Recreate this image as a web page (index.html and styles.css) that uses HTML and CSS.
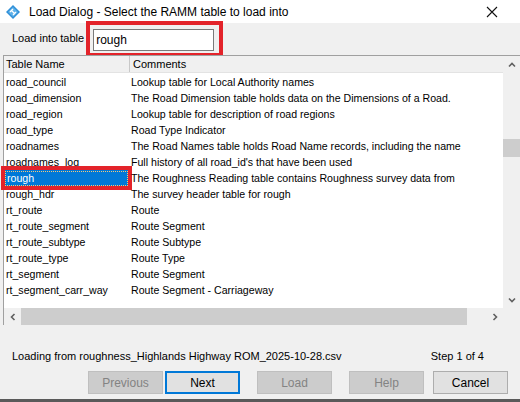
FILE: index.html
```html
<!DOCTYPE html>
<html>
<head>
<meta charset="utf-8">
<link rel="stylesheet" href="styles.css">
</head>
<body>
<div class="window">
  <div class="titlebar">
    <svg class="app-icon" width="16" height="16" viewBox="0 0 16 16">
      <path d="M8 1 L15 8 L8 15 L1 8 Z" fill="#2f8fd8"/>
      <path d="M8 3 L13 8 L8 13 L3 8 Z" fill="#5fb2ea"/>
      <path d="M5 8 L8 5 M8 11 L11 8 M6 6 L10 10" stroke="#ffffff" stroke-width="1.2" fill="none"/>
    </svg>
    <span class="title">Load Dialog - Select the RAMM table to load into</span>
    <svg class="close" width="12" height="12" viewBox="0 0 12 12">
      <path d="M1 1 L11 11 M11 1 L1 11" stroke="#111" stroke-width="1.1"/>
    </svg>
  </div>

  <div class="toprow">
    <span class="label">Load into table</span>
    <div class="highlight input-hl">
      <div class="input">rough</div>
    </div>
  </div>

  <div class="list">
    <div class="list-main">
      <div class="list-body">
        <div class="grid-header">
          <div class="col-name hcell">Table Name</div>
          <div class="col-comment hcell">Comments</div>
        </div>
        <div class="rows">
          <div class="row"><div class="col-name">road_council</div><div class="col-comment">Lookup table for Local Authority names</div></div>
          <div class="row"><div class="col-name">road_dimension</div><div class="col-comment">The Road Dimension table holds data on the Dimensions of a Road.</div></div>
          <div class="row"><div class="col-name">road_region</div><div class="col-comment">Lookup table for description of road regions</div></div>
          <div class="row"><div class="col-name">road_type</div><div class="col-comment">Road Type Indicator</div></div>
          <div class="row"><div class="col-name">roadnames</div><div class="col-comment">The Road Names table holds Road Name records, including the name</div></div>
          <div class="row"><div class="col-name">roadnames_log</div><div class="col-comment">Full history of all road_id's that have been used</div></div>
          <div class="row"><div class="col-name selected"><span class="focus">rough</span></div><div class="col-comment">The Roughness Reading table contains Roughness survey data from</div></div>
          <div class="row"><div class="col-name">rough_hdr</div><div class="col-comment">The survey header table for rough</div></div>
          <div class="row"><div class="col-name">rt_route</div><div class="col-comment">Route</div></div>
          <div class="row"><div class="col-name">rt_route_segment</div><div class="col-comment">Route Segment</div></div>
          <div class="row"><div class="col-name">rt_route_subtype</div><div class="col-comment">Route Subtype</div></div>
          <div class="row"><div class="col-name">rt_route_type</div><div class="col-comment">Route Type</div></div>
          <div class="row"><div class="col-name">rt_segment</div><div class="col-comment">Route Segment</div></div>
          <div class="row"><div class="col-name">rt_segment_carr_way</div><div class="col-comment">Route Segment - Carriageway</div></div>
        </div>
      </div>
      <div class="hscroll">
        <div class="sbtn"><svg width="8" height="8" viewBox="0 0 8 8"><path d="M5.5 1 L2.5 4 L5.5 7" stroke="#606060" stroke-width="1.6" fill="none"/></svg></div>
        <div class="hthumb"></div>
        <div class="htrack"></div>
        <div class="sbtn"><svg width="8" height="8" viewBox="0 0 8 8"><path d="M2.5 1 L5.5 4 L2.5 7" stroke="#606060" stroke-width="1.6" fill="none"/></svg></div>
      </div>
    </div>
    <div class="vscroll">
      <div class="sbtn"><svg width="8" height="8" viewBox="0 0 8 8"><path d="M1 5.5 L4 2.5 L7 5.5" stroke="#606060" stroke-width="1.6" fill="none"/></svg></div>
      <div class="vtrack-top"></div>
      <div class="vthumb"></div>
      <div class="vtrack-bottom"></div>
      <div class="sbtn"><svg width="8" height="8" viewBox="0 0 8 8"><path d="M1 2.5 L4 5.5 L7 2.5" stroke="#606060" stroke-width="1.6" fill="none"/></svg></div>
      <div class="corner"></div>
    </div>
  </div>

  <div class="status">
    <span>Loading from roughness_Highlands Highway ROM_2025-10-28.csv</span>
    <span class="step">Step 1 of 4</span>
  </div>

  <div class="buttons">
    <div class="btn disabled">Previous</div>
    <div class="btn default">Next</div>
    <div class="btn disabled load">Load</div>
    <div class="btn disabled help">Help</div>
    <div class="btn cancel">Cancel</div>
  </div>
  <div class="bottom-edge"></div>
</div>
</body>
</html>
```

FILE: styles.css
```css
html, body {
  margin: 0;
  padding: 0;
}
body {
  width: 520px;
  height: 402px;
  overflow: hidden;
  background: #f0f0f0;
  font-family: "Liberation Sans", Arial, sans-serif;
  font-size: 12px;
  color: #000;
}
.window {
  display: flex;
  flex-direction: column;
  height: 402px;
}
.titlebar {
  height: 23px;
  background: #ffffff;
  display: flex;
  align-items: center;
  padding-left: 5px;
  padding-right: 22px;
}
.app-icon {
  flex: none;
}
.title {
  margin-left: 8px;
  font-size: 12px;
  flex: 1;
}
.close {
  flex: none;
}
.toprow {
  height: 32px;
  display: flex;
  align-items: center;
  padding-left: 12px;
}
.label {
  font-size: 11px;
  margin-right: 2px;
  margin-top: -3px;
}
.highlight {
  border: 4px solid #e3232a;
}
.input-hl {
  padding: 4px 5px 2px 3px;
}
.input {
  width: 121px;
  height: 22px;
  border: 1px solid #7a7a7a;
  background: #fff;
  box-sizing: border-box;
  line-height: 20px;
  padding-left: 2px;
  font-size: 12px;
}
.list {
  margin-left: 3px;
  height: 269px;
  display: flex;
  border-top: 1px solid #a0a0a0;
  border-left: 1px solid #a0a0a0;
}
.list-main {
  flex: 1;
  display: flex;
  flex-direction: column;
}
.list-body {
  flex: 1;
  background: #fff;
  font-size: 10.6px;
}
.grid-header {
  height: 16px;
  display: flex;
  background: #f0f0f0;
  border-bottom: 1px solid #e3e3e3;
  margin-bottom: 1px;
  font-size: 11px;
}
.hcell {
  line-height: 16px;
}
.grid-header .col-name {
  border-right: 1px solid #c8c8c8;
}
.rows {
  display: flex;
  flex-direction: column;
}
.row {
  height: 16px;
  display: flex;
  line-height: 16px;
  white-space: nowrap;
}
.col-name {
  width: 123px;
  padding-left: 2px;
  box-sizing: content-box;
}
.col-comment {
  padding-left: 3px;
}
.row .col-name {
  margin-left: 1px;
  padding-left: 1px;
  width: 122px;
}
.selected {
  background: #0078d7;
  color: #fff;
  outline: 4px solid #e3232a;
}
.focus {
  display: block;
  margin: 1px 0 0 -1px;
  padding-left: 1px;
  border: 1px dotted #f5c97a;
  box-sizing: border-box;
  height: 15px;
  line-height: 13px;
}
.hscroll {
  height: 17px;
  display: flex;
  background: #f0f0f0;
}
.sbtn {
  width: 17px;
  height: 17px;
  display: flex;
  align-items: center;
  justify-content: center;
  flex: none;
}
.hthumb {
  width: 446px;
  background: #cdcdcd;
}
.htrack {
  flex: 1;
}
.vscroll {
  width: 17px;
  display: flex;
  flex-direction: column;
  background: #f0f0f0;
}
.vtrack-top {
  height: 66px;
}
.vthumb {
  height: 18px;
  background: #cdcdcd;
}
.vtrack-bottom {
  flex: 1;
}
.corner {
  height: 17px;
}
.status {
  height: 46px;
  display: flex;
  align-items: center;
  padding-top: 16px;
  box-sizing: border-box;
  padding-left: 12px;
  font-size: 11px;
  white-space: nowrap;
}
.step {
  margin-left: auto;
  margin-right: 36px;
}
.buttons {
  display: flex;
  padding-left: 88px;
  height: 23px;
}
.btn {
  width: 75px;
  height: 23px;
  box-sizing: border-box;
  border: 1px solid #adadad;
  background: #e1e1e1;
  display: flex;
  align-items: center;
  justify-content: center;
  font-size: 12px;
  margin-right: 2px;
}
.btn.disabled {
  background: #cccccc;
  border-color: #bfbfbf;
  color: #838383;
}
.btn.default {
  border: 2px solid #0078d7;
}
.btn.load {
  margin-left: 15px;
}
.btn.help {
  margin-left: 15px;
}
.btn.cancel {
  margin-left: 7px;
}
.bottom-edge {
  margin-top: auto;
  height: 3px;
  background: #5a5a5a;
}
```
